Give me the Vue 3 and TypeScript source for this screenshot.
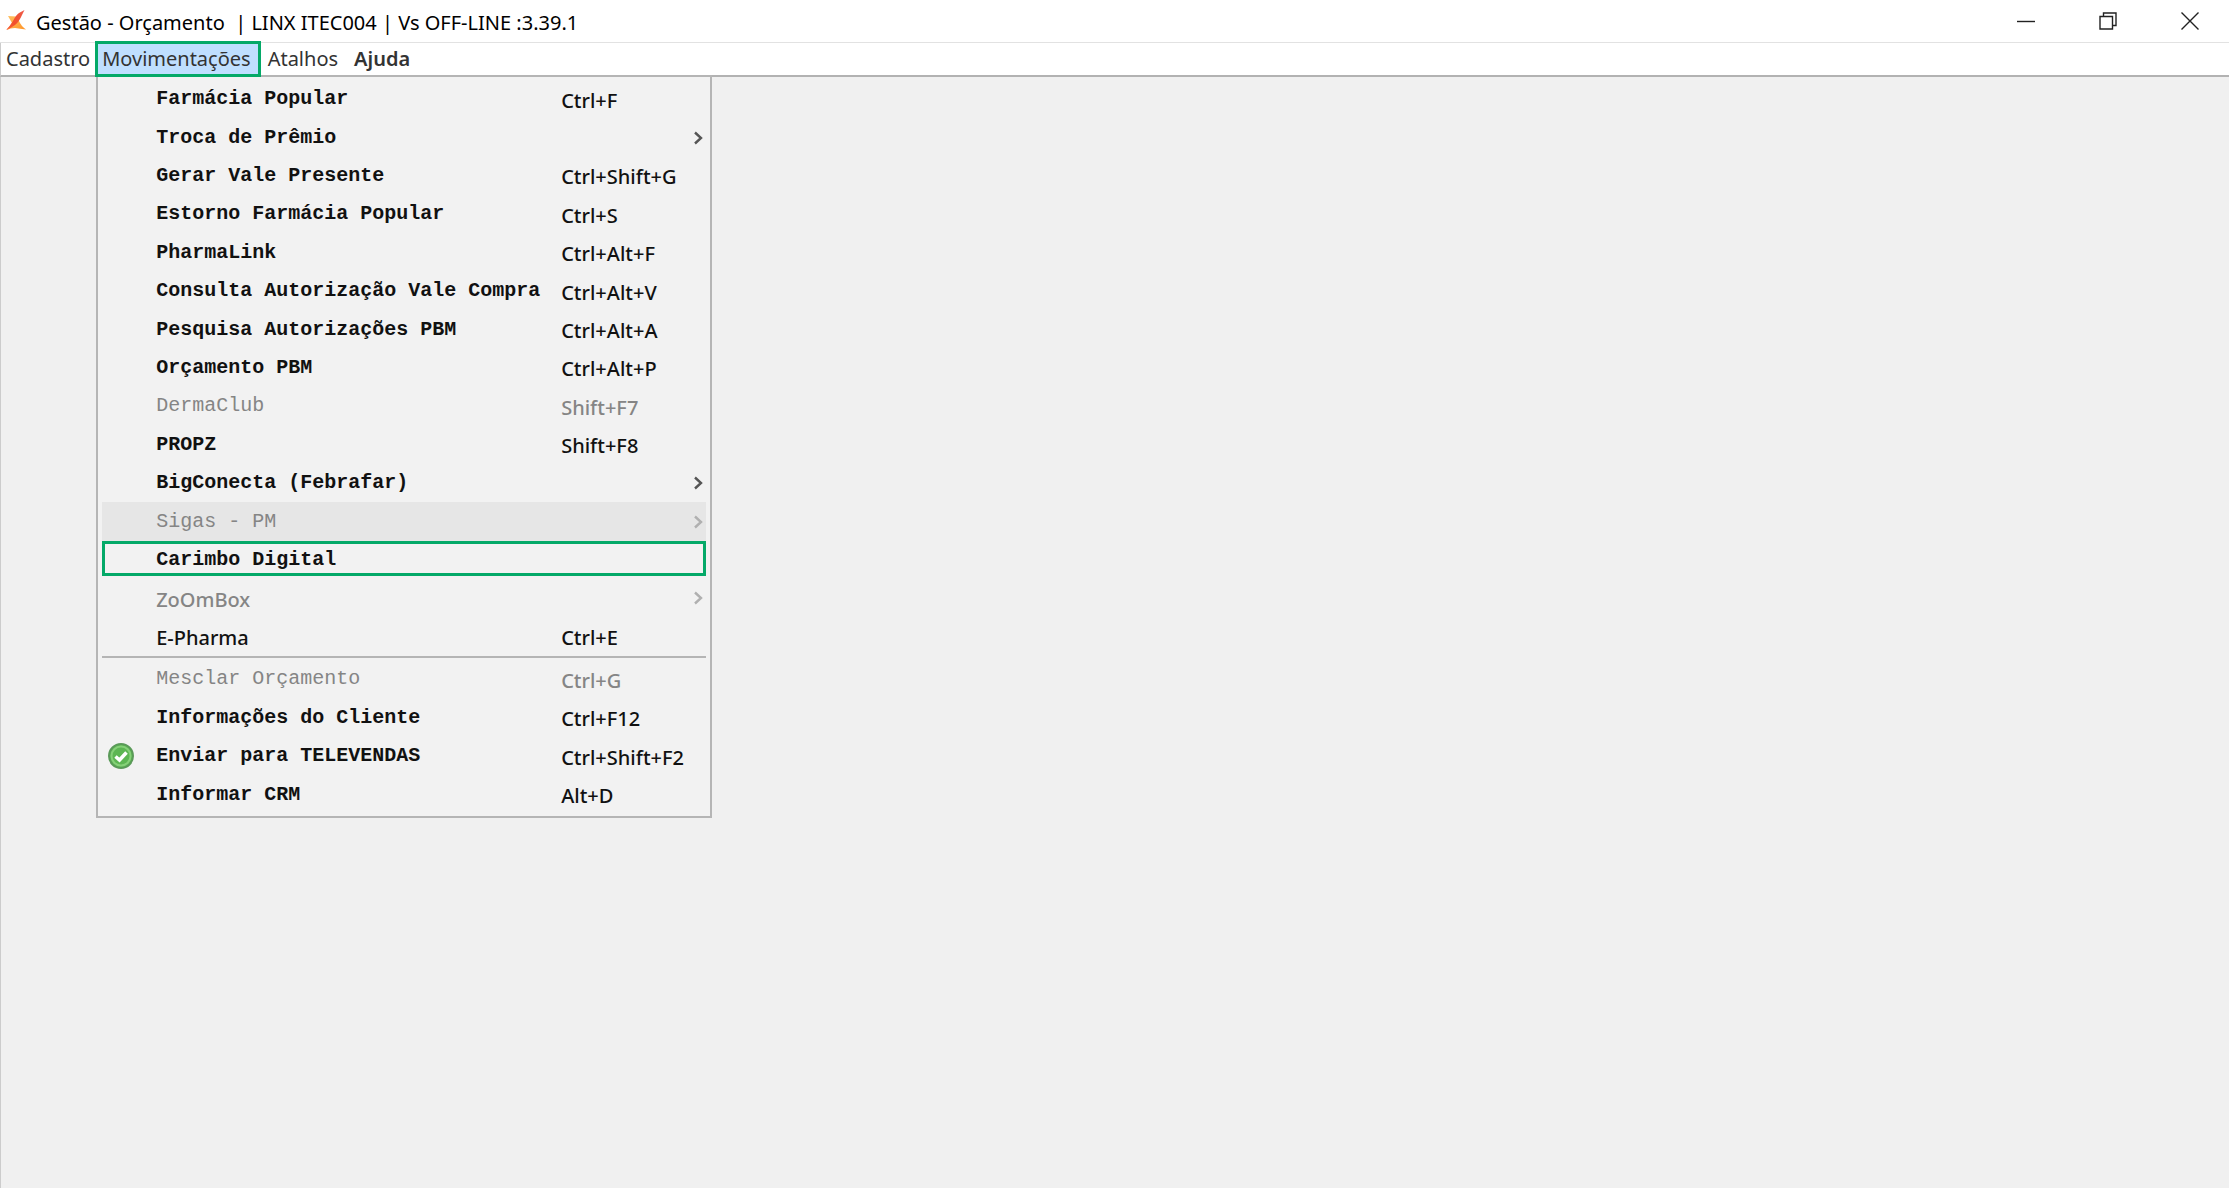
<script setup lang="ts">
interface MenuEntry {
  label: string
  shortcut?: string
  submenu?: boolean
  disabled?: boolean
  sans?: boolean
  hovered?: boolean
  marked?: boolean
  checked?: boolean
}

const title = 'Gestão - Orçamento  | LINX ITEC004 | Vs OFF-LINE :3.39.1'

const groups: MenuEntry[][] = [
  [
    { label: 'Farmácia Popular', shortcut: 'Ctrl+F' },
    { label: 'Troca de Prêmio', submenu: true },
    { label: 'Gerar Vale Presente', shortcut: 'Ctrl+Shift+G' },
    { label: 'Estorno Farmácia Popular', shortcut: 'Ctrl+S' },
    { label: 'PharmaLink', shortcut: 'Ctrl+Alt+F' },
    { label: 'Consulta Autorização Vale Compra', shortcut: 'Ctrl+Alt+V' },
    { label: 'Pesquisa Autorizações PBM', shortcut: 'Ctrl+Alt+A' },
    { label: 'Orçamento PBM', shortcut: 'Ctrl+Alt+P' },
    { label: 'DermaClub', shortcut: 'Shift+F7', disabled: true },
    { label: 'PROPZ', shortcut: 'Shift+F8' },
    { label: 'BigConecta (Febrafar)', submenu: true },
    { label: 'Sigas - PM', submenu: true, disabled: true, hovered: true },
    { label: 'Carimbo Digital', marked: true },
    { label: 'ZoOmBox', submenu: true, disabled: true, sans: true },
    { label: 'E-Pharma', shortcut: 'Ctrl+E', sans: true },
  ],
  [
    { label: 'Mesclar Orçamento', shortcut: 'Ctrl+G', disabled: true },
    { label: 'Informações do Cliente', shortcut: 'Ctrl+F12' },
    { label: 'Enviar para TELEVENDAS', shortcut: 'Ctrl+Shift+F2', checked: true },
    { label: 'Informar CRM', shortcut: 'Alt+D' },
  ],
]
</script>

<template>
  <div class="window">
    <header class="titlebar">
      <svg class="logo" width="20" height="22" viewBox="0 0 20 22" aria-hidden="true">
        <defs>
          <linearGradient id="logo-base" x1="0" y1="0" x2="1" y2="1">
            <stop offset="0" stop-color="#ffc061" />
            <stop offset="1" stop-color="#ff9326" />
          </linearGradient>
          <linearGradient id="logo-bar" x1="1" y1="0" x2="0" y2="1">
            <stop offset="0" stop-color="#ee5a4c" />
            <stop offset="0.6" stop-color="#f2502a" />
            <stop offset="1" stop-color="#f9603a" />
          </linearGradient>
        </defs>
        <path d="M2 6L10 6.5L13 11Q15 16 20 19.5Q14 18.5 9 18Q4 18 1 20L6 13Z" fill="url(#logo-base)" />
        <path d="M18.5 0L16 5Q13 12 9 15Q5 18 0 20Q4 16 7 11Q10 5 13 3Z" fill="url(#logo-bar)" />
      </svg>
      <h1 class="title">{{ title }}</h1>
      <div class="controls">
        <button type="button" aria-label="Minimizar">
          <svg width="18" height="18" viewBox="0 0 18 18"><path d="M0 9.5H18" /></svg>
        </button>
        <button type="button" aria-label="Restaurar">
          <svg width="18" height="18" viewBox="0 0 18 18">
            <path d="M1 4.5H13.5V17H1Z M4.5 4V1H17V13.5H14" />
          </svg>
        </button>
        <button type="button" aria-label="Fechar">
          <svg width="18" height="18" viewBox="0 0 18 18"><path d="M0.5 0.5L17.5 17.5M17.5 0.5L0.5 17.5" /></svg>
        </button>
      </div>
    </header>

    <nav class="menubar">
      <button type="button" class="top">Cadastro</button>
      <div class="holder">
        <button type="button" class="top open" aria-haspopup="menu" aria-expanded="true">Movimentações</button>
        <div class="menu" role="menu">
          <div v-for="(group, g) in groups" :key="g" class="group" role="group">
            <button
              v-for="entry in group"
              :key="entry.label"
              type="button"
              role="menuitem"
              class="entry"
              :class="{ sans: entry.sans, hovered: entry.hovered, marked: entry.marked }"
              :disabled="entry.disabled"
            >
              <span class="gutter">
                <svg v-if="entry.checked" width="26" height="26" viewBox="0 0 26 26" aria-hidden="true">
                  <circle cx="13" cy="13" r="12" fill="#5db653" stroke="#5a9a58" stroke-width="2" />
                  <circle cx="13" cy="13" r="9.5" fill="none" stroke="#86d079" stroke-width="2" />
                  <path d="M7.5 13.5L11.5 17L18.5 9.5" fill="none" stroke="#fff" stroke-width="3.5" />
                </svg>
              </span>
              <span class="label">{{ entry.label }}</span>
              <span v-if="entry.shortcut" class="shortcut">{{ entry.shortcut }}</span>
              <svg v-if="entry.submenu" class="arrow" width="10" height="14" viewBox="0 0 10 14" aria-hidden="true">
                <path d="M2 1.5L8 7L2 12.5" />
              </svg>
            </button>
          </div>
        </div>
      </div>
      <button type="button" class="top">Atalhos</button>
      <button type="button" class="top strong">Ajuda</button>
    </nav>

    <main class="workspace"></main>
  </div>
</template>

<style>
body {
  margin: 0;
  background: #f0f0f0;
}
</style>

<style scoped>
.window {
  display: flex;
  flex-direction: column;
  min-height: 100vh;
  font-family: "Noto Sans", "Open Sans", sans-serif;
  font-size: 20px;
  color: #111;
}

button {
  margin: 0;
  padding: 0;
  border: 0;
  background: none;
  font: inherit;
  color: inherit;
}

.titlebar {
  display: flex;
  align-items: center;
  height: 42px;
  padding: 0 6px;
  background: #fff;
  border-bottom: 1px solid #e2e2e2;
}

.logo {
  margin-right: 10px;
}

.title {
  flex: 1;
  margin: 0;
  font-size: 20px;
  font-weight: 400;
  line-height: 28px;
  padding-top: 4px;
  white-space: pre;
  color: #000;
}

.controls {
  display: flex;
  gap: 16px;
}

.controls button {
  display: flex;
  align-items: center;
  justify-content: center;
  width: 66px;
  height: 42px;
}

.controls path {
  fill: none;
  stroke: #222;
  stroke-width: 1.4;
}

.menubar {
  display: flex;
  height: 32px;
  background: #fff;
  border-bottom: 2px solid #b2b2b2;
  border-left: 1px solid #ccc;
}

.top {
  height: 32px;
  padding: 0 9px 0 7px;
  line-height: 28px;
  color: #333;
}

.top:first-child {
  padding: 0 5px;
}

.strong {
  font-weight: 600;
}

.holder {
  position: relative;
}

.top.open {
  position: relative;
  z-index: 2;
  height: 36px;
  margin: -2px 0;
  padding: 0 7px 0 4px;
  border: 3px solid #04a968;
  background: #bfdfff;
}

.menu {
  position: absolute;
  top: 32px;
  left: 1px;
  box-sizing: border-box;
  width: 616px;
  padding: 3px 4px 2px;
  background: #f2f2f2;
  border: 2px solid #b5b5b5;
}

.group {
  display: grid;
  grid-auto-rows: 1fr;
  min-height: 576px;
}

.group + .group {
  min-height: 154px;
  border-top: 2px solid #b5b5b5;
  padding-top: 2px;
}

.entry {
  position: relative;
  display: grid;
  grid-template-columns: 54px 405px 1fr;
  align-items: center;
  text-align: left;
  white-space: pre;
}

.entry:disabled {
  color: #858585;
}

.gutter {
  display: flex;
  padding-left: 6px;
}

.label {
  font-family: "Liberation Mono", "Courier New", monospace;
  font-weight: 700;
  line-height: 24px;
}

.entry:disabled .label {
  font-weight: 400;
}

.shortcut,
.sans .label,
.sans:disabled .label {
  padding-top: 3px;
  font-family: "Noto Sans", "Open Sans", sans-serif;
  font-weight: 500;
  line-height: 28px;
}

.arrow {
  grid-column: 3;
  justify-self: end;
  margin-right: 3px;
}

.arrow path {
  fill: none;
  stroke: #555;
  stroke-width: 2.4;
}

.entry:disabled .arrow path {
  stroke: #b0b0b0;
}

.hovered {
  background: #e6e6e6;
}

.marked::after {
  content: "";
  position: absolute;
  inset: 0 0 3px;
  border: 3px solid #04a968;
}

.workspace {
  flex: 1;
  background: #f0f0f0;
  border-left: 1px solid #ccc;
}
</style>
